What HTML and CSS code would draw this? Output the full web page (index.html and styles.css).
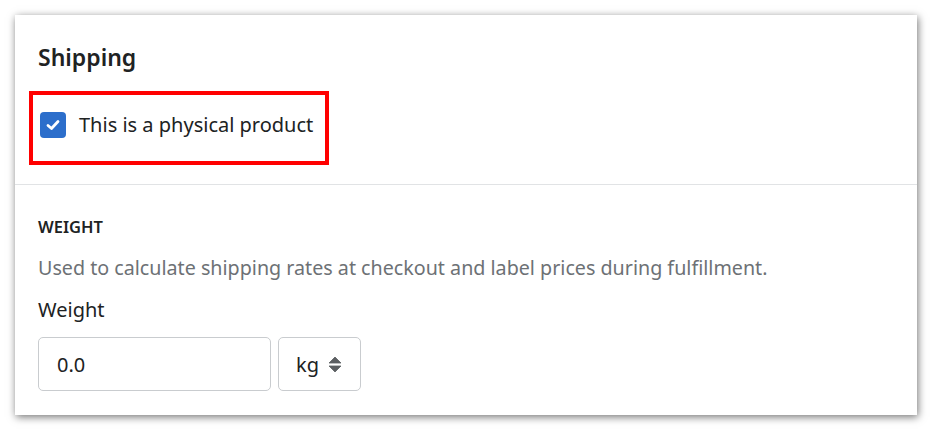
FILE: index.html
```html
<!DOCTYPE html>
<html lang="en">
<head>
  <meta charset="UTF-8" />
  <title>Shipping</title>
  <link rel="stylesheet" href="styles.css">
</head>
<body>
<div class="card">

  <!-- SHIPPING -->
  <div class="section section-top">
    <h2>Shipping</h2>
    <div class="highlight">
      <label class="check">
        <span class="check-box">
          <svg width="14" height="12" viewBox="0 0 14 12"><path d="M2 6.5 L5.5 9.5 L12 2.5" fill="none" stroke="#fff" stroke-width="2.8" stroke-linecap="round" stroke-linejoin="round"/></svg>
        </span>
        <span class="check-label">This is a physical product</span>
      </label>
    </div>
  </div>

  <!-- WEIGHT -->
  <div class="section section-bottom">
    <h3>Weight</h3>
    <p class="help">Used to calculate shipping rates at checkout and label prices during fulfillment.</p>
    <div class="field-label">Weight</div>
    <div class="field-row">
      <div class="text-input">0.0</div>
      <div class="select">
        <span>kg</span>
        <svg width="14" height="18" viewBox="0 0 14 18"><path d="M7 2 L13 8 H1 Z" fill="#5c5f62" stroke="#5c5f62" stroke-width="0.8" stroke-linejoin="round"/><path d="M7 17 L13 11 H1 Z" fill="#5c5f62" stroke="#5c5f62" stroke-width="0.8" stroke-linejoin="round"/></svg>
      </div>
    </div>
  </div>

</div>
</body>
</html>
```

FILE: styles.css
```css
body {
  margin: 0;
  padding: 15px;
  background: #fff;
  font-family: 'Noto Sans', 'Open Sans', sans-serif;
  color: #202223;
}
.card {
  width: 902px;
  height: 400px;
  box-sizing: border-box;
  background: #fff;
  box-shadow: 1px 2px 8px rgba(0,0,0,0.55);
}
.section {
  padding-left: 23px;
  padding-right: 23px;
}
.section-top {
  padding-top: 28px;
  padding-bottom: 19px;
  border-bottom: 1px solid #e1e3e5;
}
h2 {
  margin: 0;
  font-size: 23px;
  line-height: 28px;
  font-weight: 600;
}
.highlight {
  margin: 20px 0 0 -9px;
  width: 300px;
  height: 74px;
  box-sizing: border-box;
  border: 4px solid #ff0000;
  padding: 17px 0 0 7px;
}
.check {
  display: flex;
  align-items: center;
  gap: 13px;
}
.check-box {
  width: 26px;
  height: 26px;
  border-radius: 4px;
  background: #2c6ecb;
  display: flex;
  align-items: center;
  justify-content: center;
}
.check-label {
  font-size: 20px;
  line-height: 26px;
}
.section-bottom {
  padding-top: 30px;
  padding-bottom: 24px;
}
h3 {
  margin: 0;
  font-size: 16.5px;
  line-height: 24px;
  font-weight: 600;
  text-transform: uppercase;
}
.help {
  margin: 17px 0 0;
  font-size: 19.7px;
  line-height: 24px;
  color: #6d7175;
}
.field-label {
  margin-top: 18px;
  font-size: 20px;
  line-height: 24px;
}
.field-row {
  display: flex;
  gap: 7px;
  margin-top: 15px;
}
.text-input, .select {
  height: 54px;
  box-sizing: border-box;
  border: 1px solid #c9cccf;
  border-radius: 5px;
  font-size: 20px;
  display: flex;
  align-items: center;
}
.text-input {
  width: 233px;
  padding-left: 18px;
}
.select {
  width: 83px;
  padding-left: 17px;
  gap: 9px;
}
```
